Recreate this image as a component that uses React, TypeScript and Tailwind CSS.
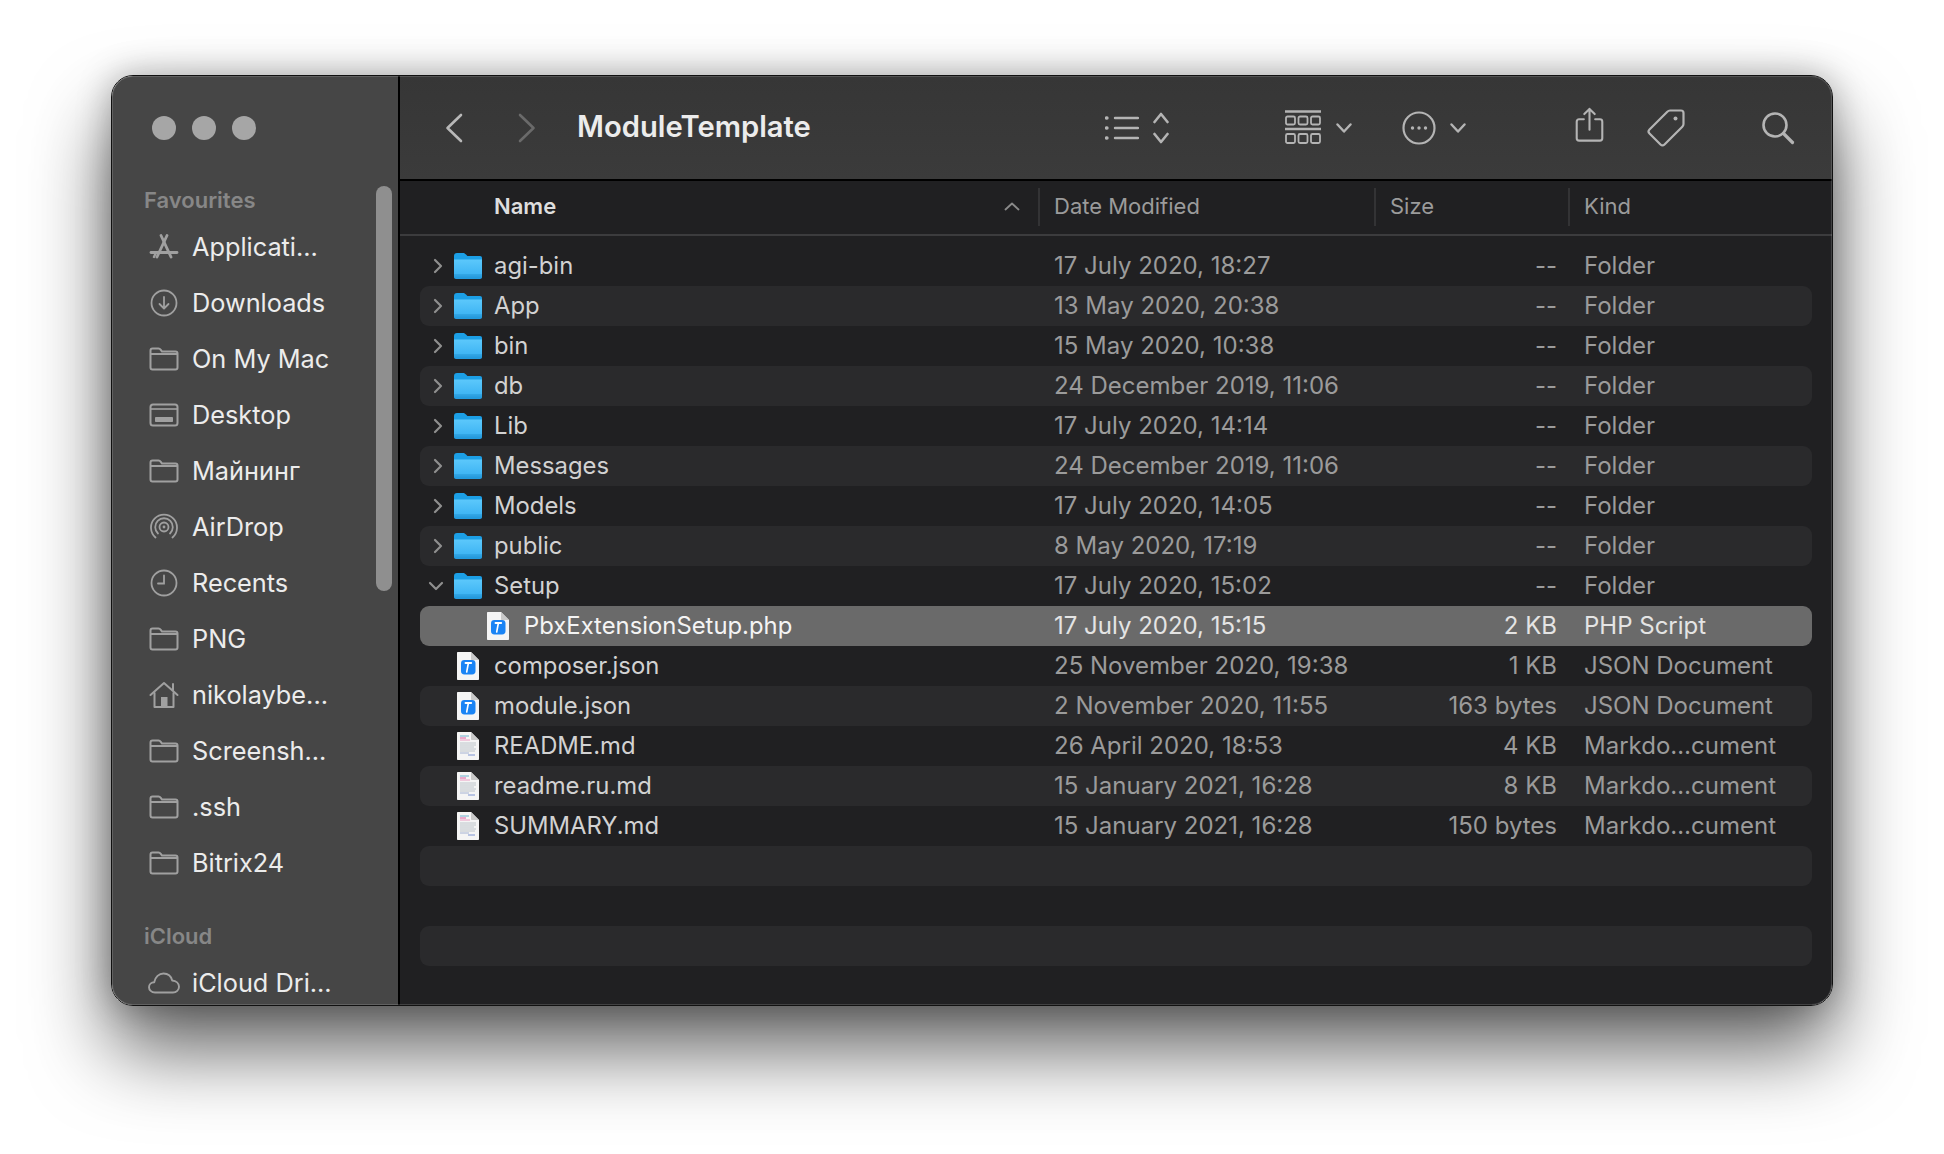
import React from 'react';

const FolderOutline = () => (
  <svg width="30" height="24" viewBox="0 0 30 24" fill="none" stroke="#a0a0a0" strokeWidth="2">
    <path d="M1.500 7V3.500C1.500 2.300 2.300 1.500 3.500 1.500H9.500C10.600 1.500 11.200 2 11.800 2.800L13 4.500H26.500C27.700 4.500 28.500 5.300 28.500 6.500V20.500C28.500 21.700 27.700 22.500 26.500 22.500H3.500C2.300 22.500 1.500 21.700 1.500 20.500V7H28.500" />
  </svg>
);

const AppsIcon = () => (
  <svg width="30" height="26" viewBox="0 0 30 26" fill="none" stroke="#a0a0a0" strokeWidth="2.800" strokeLinecap="round">
    <path d="M12 1.500L22 23" />
    <path d="M18 1.500L8 23" />
    <path d="M2 18.500H28" />
    <path d="M5 23l2-4.500" strokeWidth="2.400" />
  </svg>
);

const DownloadIcon = () => (
  <svg width="28" height="28" viewBox="0 0 28 28" fill="none" stroke="#a0a0a0" strokeWidth="1.800" strokeLinecap="round" strokeLinejoin="round">
    <circle cx="14" cy="14" r="12.500" />
    <path d="M14 8v11M9.500 15l4.500 4.500 4.500-4.500" />
  </svg>
);

const ClockIcon = () => (
  <svg width="28" height="28" viewBox="0 0 28 28" fill="none" stroke="#a0a0a0" strokeWidth="1.800" strokeLinecap="round">
    <circle cx="14" cy="14" r="12.500" />
    <path d="M14 6.500V14.500H8" />
  </svg>
);

const DriveIcon = () => (
  <svg width="30" height="24" viewBox="0 0 30 24" fill="none" stroke="#a0a0a0" strokeWidth="2">
    <rect x="1.500" y="1.500" width="27" height="21" rx="2.500" />
    <path d="M2 6H28" strokeWidth="1.600" />
    <rect x="6" y="14" width="18" height="5" rx="0.800" fill="#a0a0a0" stroke="none" />
  </svg>
);

const AirDropIcon = () => (
  <svg width="28" height="28" viewBox="0 0 28 28" fill="none" stroke="#a0a0a0" strokeWidth="1.800" strokeLinecap="round">
    <path d="M5.500 24.500A13 13 0 1 1 22.500 24.500" />
    <path d="M8 20.500A8.800 8.800 0 1 1 20 20.500" />
    <circle cx="14" cy="14" r="4.500" />
    <circle cx="14" cy="14" r="1.400" fill="#a0a0a0" stroke="none" />
  </svg>
);

const HomeIcon = () => (
  <svg width="30" height="28" viewBox="0 0 30 28" fill="none" stroke="#a0a0a0" strokeWidth="2" strokeLinecap="round" strokeLinejoin="round">
    <path d="M1.500 14L15 2l13.500 12" />
    <path d="M24 3v6" />
    <path d="M5.500 12v14h19V12" />
    <rect x="12" y="16" width="6.500" height="10" fill="#a0a0a0" stroke="none" />
  </svg>
);

const CloudIcon = () => (
  <svg width="32" height="22" viewBox="0 0 32 22" fill="none" stroke="#a0a0a0" strokeWidth="1.900" strokeLinejoin="round">
    <path d="M7 20.500C3.500 20.500 1 18 1 15.200C1 12.300 3.400 10.200 6.200 10.200C7.200 5 11 1.500 15.500 1.500C20 1.500 23.200 4.500 24.200 8.500C28 8.800 31 11.300 31 14.700C31 18 28.300 20.500 25 20.500Z" />
  </svg>
);

const BlueFolder = () => (
  <svg width="28" height="26" viewBox="0 0 28 26" className="shrink-0">
    <defs>
      <linearGradient id="folderBody" x1="0" y1="0" x2="0" y2="1">
        <stop offset="0" stopColor="#5cc8fb" />
        <stop offset="0.75" stopColor="#3fb5f4" />
        <stop offset="1" stopColor="#1f97dc" />
      </linearGradient>
    </defs>
    <path d="M0 3C0 1 1 0 3 0H9C10.500 0 11 .6 12 1.600L13.400 3H26C27.200 3 28 3.800 28 5V7H0Z" fill="#1c9fe6" />
    <path d="M0 6.500H28V24C28 25.200 27.200 26 26 26H2C.8 26 0 25.200 0 24Z" fill="url(#folderBody)" />
    <path d="M0 22H28M0 24H28" stroke="#1f8fd0" strokeWidth="0.7" />
  </svg>
);

const DocBase = ({ children }: { children?: React.ReactNode }) => (
  <svg width="22" height="28" viewBox="0 0 22 28" className="shrink-0">
    <path d="M1 0H14L22 8V27C22 27.600 21.600 28 21 28H1C.4 28 0 27.600 0 27V1C0 .4 .4 0 1 0Z" fill="#f5f5f5" />
    <path d="M14 0L22 8H15C14.400 8 14 7.600 14 7Z" fill="#c9c9c9" />
    {children}
  </svg>
);

const PhpIcon = () => (
  <DocBase>
    <rect x="4" y="8" width="14.500" height="14.500" rx="3.400" fill="#1a84f5" />
    <path d="M9.700 20L11.300 11.500" stroke="#fff" strokeWidth="1.600" strokeLinecap="round" />
    <path d="M8.500 11H14.200" stroke="#fff" strokeWidth="1.900" strokeLinecap="round" />
  </DocBase>
);

const TextDocIcon = () => (
  <DocBase>
    <path d="M3 4H12" stroke="#5ea9c9" strokeWidth="0.9" />
    <path d="M3 6H9" stroke="#de4f9a" strokeWidth="0.9" />
    <path d="M3 8H13" stroke="#e77ab0" strokeWidth="0.7" />
    <path d="M3 11H19M3 13H19M3 15H17M3 17H19M3 19H18" stroke="#b8c0c6" strokeWidth="0.9" />
    <path d="M3 21H12" stroke="#8fa1c9" strokeWidth="0.8" />
    <path d="M11 23H18" stroke="#5a79c9" strokeWidth="0.8" />
  </DocBase>
);

const Chevron = ({ open }: { open?: boolean }) => (
  <svg width="16" height="16" viewBox="0 0 16 16" fill="none" stroke="#8f8f8f" strokeWidth="2.200" strokeLinecap="round" strokeLinejoin="round" className={open ? 'mr-[4px]' : ''}>
    <path d={open ? 'M2 5l6 6 6-6' : 'M5 2l6 6-6 6'} />
  </svg>
);

const SmallDown = () => (
  <svg width="16" height="10" viewBox="0 0 16 10" fill="none" stroke="#b4b4b4" strokeWidth="2.400" strokeLinecap="round" strokeLinejoin="round">
    <path d="M1.500 1.500L8 8.500l6.500-7" />
  </svg>
);

const sidebarItems: { label: string; icon: React.ReactNode }[] = [
  { label: 'Applicati...', icon: <AppsIcon /> },
  { label: 'Downloads', icon: <DownloadIcon /> },
  { label: 'On My Mac', icon: <FolderOutline /> },
  { label: 'Desktop', icon: <DriveIcon /> },
  { label: 'Майнинг', icon: <FolderOutline /> },
  { label: 'AirDrop', icon: <AirDropIcon /> },
  { label: 'Recents', icon: <ClockIcon /> },
  { label: 'PNG', icon: <FolderOutline /> },
  { label: 'nikolaybe...', icon: <HomeIcon /> },
  { label: 'Screensh...', icon: <FolderOutline /> },
  { label: '.ssh', icon: <FolderOutline /> },
  { label: 'Bitrix24', icon: <FolderOutline /> },
];

type FileRow = {
  name: string;
  date: string;
  size: string;
  kind: string;
  type: 'folder' | 'open' | 'php' | 'text';
  nested?: boolean;
  selected?: boolean;
};

const files: FileRow[] = [
  { name: 'agi-bin', date: '17 July 2020, 18:27', size: '--', kind: 'Folder', type: 'folder' },
  { name: 'App', date: '13 May 2020, 20:38', size: '--', kind: 'Folder', type: 'folder' },
  { name: 'bin', date: '15 May 2020, 10:38', size: '--', kind: 'Folder', type: 'folder' },
  { name: 'db', date: '24 December 2019, 11:06', size: '--', kind: 'Folder', type: 'folder' },
  { name: 'Lib', date: '17 July 2020, 14:14', size: '--', kind: 'Folder', type: 'folder' },
  { name: 'Messages', date: '24 December 2019, 11:06', size: '--', kind: 'Folder', type: 'folder' },
  { name: 'Models', date: '17 July 2020, 14:05', size: '--', kind: 'Folder', type: 'folder' },
  { name: 'public', date: '8 May 2020, 17:19', size: '--', kind: 'Folder', type: 'folder' },
  { name: 'Setup', date: '17 July 2020, 15:02', size: '--', kind: 'Folder', type: 'open' },
  { name: 'PbxExtensionSetup.php', date: '17 July 2020, 15:15', size: '2 KB', kind: 'PHP Script', type: 'php', nested: true, selected: true },
  { name: 'composer.json', date: '25 November 2020, 19:38', size: '1 KB', kind: 'JSON Document', type: 'php' },
  { name: 'module.json', date: '2 November 2020, 11:55', size: '163 bytes', kind: 'JSON Document', type: 'php' },
  { name: 'README.md', date: '26 April 2020, 18:53', size: '4 KB', kind: 'Markdo…cument', type: 'text' },
  { name: 'readme.ru.md', date: '15 January 2021, 16:28', size: '8 KB', kind: 'Markdo…cument', type: 'text' },
  { name: 'SUMMARY.md', date: '15 January 2021, 16:28', size: '150 bytes', kind: 'Markdo…cument', type: 'text' },
];

const Row = ({ row, striped }: { row: FileRow; striped: boolean }) => {
  const muted = row.selected ? 'text-[#e4e4e4]' : 'text-[#9b9b9b]';
  const isFolder = row.type === 'folder' || row.type === 'open';
  return (
    <div className={`flex h-[40px] items-center rounded-[9px] ${row.selected ? 'bg-[#6a6a6a]' : striped ? 'bg-[#2a2a2c]' : ''}`}>
      <div className="flex w-[634px] items-center">
        <div className="flex w-[34px] justify-center pl-[1px]">
          {row.type === 'folder' && <Chevron />}
          {row.type === 'open' && <Chevron open />}
        </div>
        {isFolder ? (
          <BlueFolder />
        ) : (
          <div className={row.nested ? 'ml-[33px]' : 'ml-[3px]'}>
            {row.type === 'php' ? <PhpIcon /> : <TextDocIcon />}
          </div>
        )}
        <span className={`${isFolder ? 'ml-[12px]' : 'ml-[15px]'} text-[23.850px] ${row.selected ? 'text-[#f4f4f4]' : 'text-[#d2d2d2]'}`}>{row.name}</span>
      </div>
      <span className={`w-[360px] ${muted}`}>{row.date}</span>
      <span className={`w-[143px] text-right ${muted}`}>{row.size}</span>
      <span className={`ml-[27px] ${muted}`}>{row.kind}</span>
    </div>
  );
};

export default function App() {
  return (
    <div className="min-h-[1154px] bg-white pt-[75px] pl-[111px] font-['Inter',sans-serif]">
      <div className="relative flex h-[931px] w-[1722px] overflow-hidden rounded-[22px] border border-[#111111] shadow-[0_44px_80px_rgba(0,0,0,0.62),0_0_34px_rgba(0,0,0,0.28)]">
        {/* sidebar */}
        <aside className="relative w-[288px] shrink-0 overflow-hidden border-r-2 border-black bg-[#464646]">
          <div className="flex h-[103px] items-center gap-[16px] pl-[40px]">
            <span className="h-[24px] w-[24px] rounded-full bg-[#a6a6a6]" />
            <span className="h-[24px] w-[24px] rounded-full bg-[#a6a6a6]" />
            <span className="h-[24px] w-[24px] rounded-full bg-[#a6a6a6]" />
          </div>
          <div className="flex h-[40px] items-center pt-[2px] pl-[32px] text-[22px] font-semibold text-[#878787]">Favourites</div>
          {sidebarItems.map(item => (
            <div key={item.label} className="flex h-[56px] items-center text-[25.300px] text-[#ececec]">
              <div className="flex w-[80px] justify-center pl-[24px]">{item.icon}</div>
              <span>{item.label}</span>
            </div>
          ))}
          <div className="mt-[26px] flex h-[38px] items-center pl-[32px] text-[22px] font-semibold text-[#878787]">iCloud</div>
          <div className="flex h-[56px] items-center text-[25.300px] text-[#ececec]">
            <div className="flex w-[80px] justify-center pl-[24px]">
              <CloudIcon />
            </div>
            <span>iCloud Dri...</span>
          </div>
          {/* scrollbar thumb */}
          <div className="absolute top-[110px] right-[6px] h-[405px] w-[16px] rounded-full bg-[#8f8f8f]" />
        </aside>

        <main className="flex min-w-0 flex-1 flex-col bg-[#202022]">
          {/* toolbar */}
          <div className="flex h-[105px] shrink-0 items-center border-b-2 border-black bg-gradient-to-b from-[#363636] to-[#3b3b3b]">
            <svg width="18" height="30" viewBox="0 0 18 30" fill="none" stroke="#b8b8b8" strokeWidth="2.600" strokeLinecap="round" strokeLinejoin="round" className="ml-[45px]">
              <path d="M16 2L2.500 15 16 28" />
            </svg>
            <svg width="18" height="30" viewBox="0 0 18 30" fill="none" stroke="#6a6a6a" strokeWidth="2.600" strokeLinecap="round" strokeLinejoin="round" className="ml-[55px]">
              <path d="M2 2l13.500 13L2 28" />
            </svg>
            <span className="mb-[2px] ml-[41px] w-[401px] text-[29.200px] font-semibold text-[#ececec]">ModuleTemplate</span>
            {/* list view */}
            <svg width="34" height="26" viewBox="0 0 34 26" fill="none" stroke="#b4b4b4" strokeWidth="2.400" strokeLinecap="round" className="ml-[127px]">
              <path d="M10 3H33M10 13H33M10 23H33" />
              <path d="M1.500 3H2M1.500 13H2M1.500 23H2" strokeWidth="3.400" />
            </svg>
            <svg width="16" height="34" viewBox="0 0 16 34" fill="none" stroke="#b4b4b4" strokeWidth="2.600" strokeLinecap="round" strokeLinejoin="round" className="ml-[14px]">
              <path d="M1.500 11L8 3l6.500 8M1.500 23L8 31l6.500-8" />
            </svg>
            {/* group */}
            <svg width="36" height="36" viewBox="0 0 36 36" fill="none" stroke="#b4b4b4" strokeWidth="1.800" className="ml-[116px]">
              <path d="M0 1.500H36M0 19H36" strokeWidth="2.400" />
              <rect x="1" y="6.500" width="9" height="8" rx="1.500" />
              <rect x="13.500" y="6.500" width="9" height="8" rx="1.500" />
              <rect x="26" y="6.500" width="9" height="8" rx="1.500" />
              <rect x="1" y="24" width="9" height="9" rx="1.500" />
              <rect x="13.500" y="24" width="9" height="9" rx="1.500" />
              <rect x="26" y="24" width="9" height="9" rx="1.500" />
            </svg>
            <div className="ml-[15px]">
              <SmallDown />
            </div>
            {/* more */}
            <svg width="34" height="34" viewBox="0 0 34 34" fill="none" stroke="#b4b4b4" strokeWidth="2.200" className="ml-[50px]">
              <circle cx="17" cy="17" r="15.500" />
              <circle cx="10.500" cy="17" r="1.700" fill="#b4b4b4" stroke="none" />
              <circle cx="17" cy="17" r="1.700" fill="#b4b4b4" stroke="none" />
              <circle cx="23.500" cy="17" r="1.700" fill="#b4b4b4" stroke="none" />
            </svg>
            <div className="ml-[14px]">
              <SmallDown />
            </div>
            {/* share */}
            <svg width="29" height="36" viewBox="0 0 30 38" fill="none" stroke="#b4b4b4" strokeWidth="2.200" strokeLinecap="round" strokeLinejoin="round" className="mb-[5px] ml-[109px]">
              <path d="M15 24V2M9.500 7.500L15 2l5.500 5.500" />
              <path d="M9 13H4C2.500 13 1.500 14 1.500 15.500V33C1.500 34.500 2.500 35.500 4 35.500H26C27.500 35.500 28.500 34.500 28.500 33V15.500C28.500 14 27.500 13 26 13H21" />
            </svg>
            {/* tag */}
            <svg width="40" height="40" viewBox="0 0 40 40" fill="none" stroke="#b4b4b4" strokeWidth="2.200" strokeLinejoin="round" className="ml-[42px]">
              <path d="M24 2.500H35C36.500 2.500 37.500 3.500 37.500 5V16C37.500 17 37 18 36.300 18.700L18.500 36.500C17.300 37.700 15.700 37.700 14.500 36.500L3.500 25.500C2.300 24.300 2.300 22.700 3.500 21.500L21.300 3.700C22 3 23 2.500 24 2.500Z" />
              <circle cx="29.500" cy="10.500" r="2" fill="#b4b4b4" stroke="none" />
            </svg>
            {/* search */}
            <svg width="34" height="34" viewBox="0 0 34 34" fill="none" stroke="#b4b4b4" strokeWidth="2.600" strokeLinecap="round" className="ml-[75px]">
              <circle cx="14" cy="14" r="11.500" />
              <path d="M22.500 22.500L31.500 31.500" strokeWidth="3.200" />
            </svg>
          </div>

          {/* column header */}
          <div className="flex h-[55px] shrink-0 items-center border-b-2 border-[#3c3c3e] pb-[2px] text-[22px] text-[#9b9b9b]">
            <div className="flex w-[638px] items-center pl-[94px]">
              <span className="font-semibold text-[#dedede]">Name</span>
              <svg width="16" height="9" viewBox="0 0 16 9" fill="none" stroke="#8a8a8a" strokeWidth="1.800" strokeLinecap="round" strokeLinejoin="round" className="ml-auto mr-[18px]">
                <path d="M1.500 7.500L8 1.500l6.500 6" />
              </svg>
            </div>
            <div className="flex h-[38px] w-[336px] items-center border-l-2 border-[#333335] pl-[14px]">Date Modified</div>
            <div className="flex h-[38px] w-[194px] items-center border-l-2 border-[#333335] pl-[14px]">Size</div>
            <div className="flex h-[38px] flex-1 items-center border-l-2 border-[#333335] pl-[14px]">Kind</div>
          </div>

          {/* file list */}
          <div className="mx-[20px] flex-1 overflow-hidden pt-[10px] text-[24px]">
            {files.map((row, i) => (
              <Row key={row.name} row={row} striped={i % 2 === 1} />
            ))}
            <div className="h-[40px] rounded-[9px] bg-[#2a2a2c]" />
            <div className="h-[40px]" />
            <div className="h-[40px] rounded-[9px] bg-[#2a2a2c]" />
          </div>
        </main>
        {/* inner edge highlight over everything */}
        <div className="pointer-events-none absolute inset-0 rounded-[21px] border border-white/15" />
      </div>
    </div>
  );
}
